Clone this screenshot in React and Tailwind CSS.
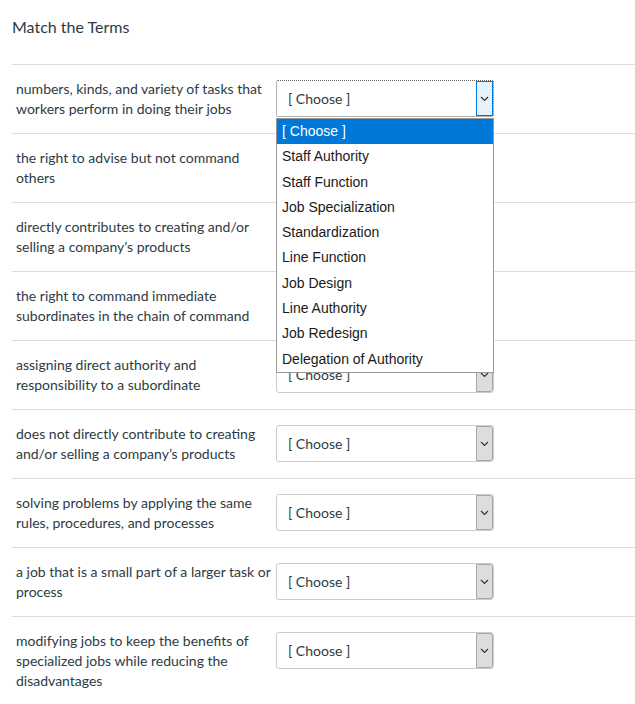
import React from 'react';

const TERMS = [
  'numbers, kinds, and variety of tasks that workers perform in doing their jobs',
  'the right to advise but not command others',
  'directly contributes to creating and/or selling a company’s products',
  'the right to command immediate subordinates in the chain of command',
  'assigning direct authority and responsibility to a subordinate',
  'does not directly contribute to creating and/or selling a company’s products',
  'solving problems by applying the same rules, procedures, and processes',
  'a job that is a small part of a larger task or process',
  'modifying jobs to keep the benefits of specialized jobs while reducing the disadvantages',
];

const OPTIONS = [
  '[ Choose ]',
  'Staff Authority',
  'Staff Function',
  'Job Specialization',
  'Standardization',
  'Line Function',
  'Job Design',
  'Line Authority',
  'Job Redesign',
  'Delegation of Authority',
];

const Chevron = () => (
  <svg width="9" height="6" viewBox="0 0 9 6" fill="none">
    <polyline points="1,1 4.5,4.5 8,1" stroke="#333" strokeWidth="1.2" />
  </svg>
);

// native-looking select, the first one is open
const Select = ({ open }) => (
  <div className="relative mt-px shrink-0">
    <div
      className={
        open
          ? 'flex h-[37px] w-[218px] items-stretch rounded-[2px] border border-dotted border-[#666] bg-white'
          : 'flex h-[37px] w-[218px] items-stretch rounded-[3px] border border-[#c7cdd1] bg-white'
      }
    >
      <span className="flex flex-1 items-center pl-[11px] text-[14px]">[ Choose ]</span>
      <span
        className={
          open
            ? 'flex w-[17px] items-center justify-center border border-[#0078d7] bg-[#e5f1fb]'
            : 'flex w-[17px] items-center justify-center rounded-r-[3px] border border-[#a6a6a6] bg-[#dddddd]'
        }
      >
        <Chevron />
      </span>
    </div>

    {open && (
      <ul className="absolute left-0 top-full z-10 mt-px w-[218px] border border-[#999] bg-white text-[14px] text-[#1a1a1a] [font-family:'Liberation_Sans',Arial,sans-serif]">
        {OPTIONS.map((o, i) => (
          <li
            key={o}
            className={
              i === 0
                ? 'h-[25.3px] bg-[#0078d7] pl-[5px] leading-[25.3px] text-white'
                : 'h-[25.3px] pl-[5px] leading-[25.3px]'
            }
          >
            {o}
          </li>
        ))}
      </ul>
    )}
  </div>
);

export default function App() {
  return (
    <div className="min-h-[704px] bg-white pl-3 text-[#2d3b45] [font-family:Lato,'Noto_Sans',sans-serif]">
      <h1 className="pt-[17px] text-[16px] leading-5">Match the Terms</h1>

      <div className="mt-[27px]">
        {TERMS.map((t, i) => (
          <div key={i} className="flex items-start border-t border-[#dddddd] pt-[14px] pb-[14px] pl-1">
            <p className="mr-[2px] w-[258px] shrink-0 text-[14px] leading-5">{t}</p>
            <Select open={i === 0} />
          </div>
        ))}
      </div>
    </div>
  );
}
